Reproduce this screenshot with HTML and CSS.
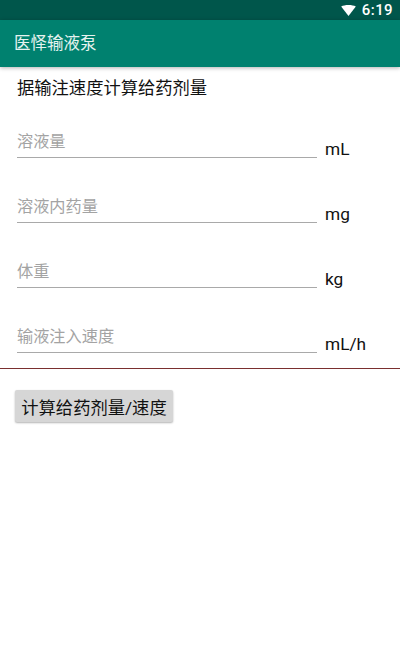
FILE: index.html
```html
<!DOCTYPE html>
<html lang="zh-CN">
<head>
    <meta charset="UTF-8">
    <meta name="viewport" content="width=device-width, initial-scale=1.0">
    <title>医怿输液泵</title>
    <link rel="stylesheet" href="styles.css">
</head>
<body>
    <!-- Status bar -->
    <div class="status-bar">
        <svg class="wifi" width="15" height="11" viewBox="0 0 16 12"><path d="M0 1.6C2 .6 4.8 0 8 0s6 .6 8 1.6L8 12z" fill="#fff"/></svg>
        <span class="clock">6:19</span>
    </div>
    <!-- App bar -->
    <div class="app-bar">医怿输液泵</div>

    <div class="content">
        <div class="heading">据输注速度计算给药剂量</div>

        <div class="fields">
            <div class="field-row">
                <div class="field">溶液量</div>
                <span class="unit">mL</span>
            </div>
            <div class="field-row">
                <div class="field">溶液内药量</div>
                <span class="unit">mg</span>
            </div>
            <div class="field-row">
                <div class="field">体重</div>
                <span class="unit">kg</span>
            </div>
            <div class="field-row">
                <div class="field">输液注入速度</div>
                <span class="unit">mL/h</span>
            </div>
        </div>

        <div class="divider"></div>

        <button class="calc-btn">计算给药剂量/速度</button>
    </div>
</body>
</html>
```

FILE: styles.css
```css
body {
    margin: 0;
    height: 661px;
    overflow: hidden;
    background-color: #fff;
    font-family: "Roboto", "Noto Sans CJK SC", sans-serif;
}
.status-bar {
    height: 20px;
    background-color: #00564b;
    color: #fff;
    display: flex;
    justify-content: flex-end;
    align-items: center;
    padding-right: 7px;
    gap: 6px;
}
.clock {
    font-size: 15px;
    font-weight: 500;
    letter-spacing: 0.4px;
}
.app-bar {
    height: 47px;
    background-color: #00816f;
    color: #e6f3f0;
    font-size: 16.5px;
    line-height: 47px;
    padding-left: 14px;
    box-shadow: 0 1px 4px rgba(0,0,0,0.3);
}
.content {
    padding-top: 9px;
}
.heading {
    font-size: 17.3px;
    line-height: 24px;
    color: #111;
    padding-left: 17px;
    margin-bottom: 26px;
}
.fields {
    display: grid;
    gap: 33px;
    padding-left: 17px;
}
.field-row {
    display: flex;
    align-items: flex-end;
    height: 32px;
}
.field {
    width: 300px;
    height: 32px;
    box-sizing: border-box;
    border-bottom: 1px solid #a9a9a9;
    font-size: 16.2px;
    line-height: 31px;
    color: #a3a3a3;
}
.unit {
    margin-left: 8px;
    font-size: 17.3px;
    line-height: 17px;
    color: #111;
}
.divider {
    height: 1px;
    background-color: #7a2f2f;
    margin-top: 15px;
}
.calc-btn {
    display: block;
    margin: 21px 0 0 15px;
    width: 158px;
    height: 32px;
    padding: 0;
    border: none;
    border-radius: 2px;
    background-color: #d6d6d6;
    box-shadow: 0 1px 2px rgba(0,0,0,0.3);
    color: #111;
    font-family: inherit;
    font-size: 17.3px;
}
```
